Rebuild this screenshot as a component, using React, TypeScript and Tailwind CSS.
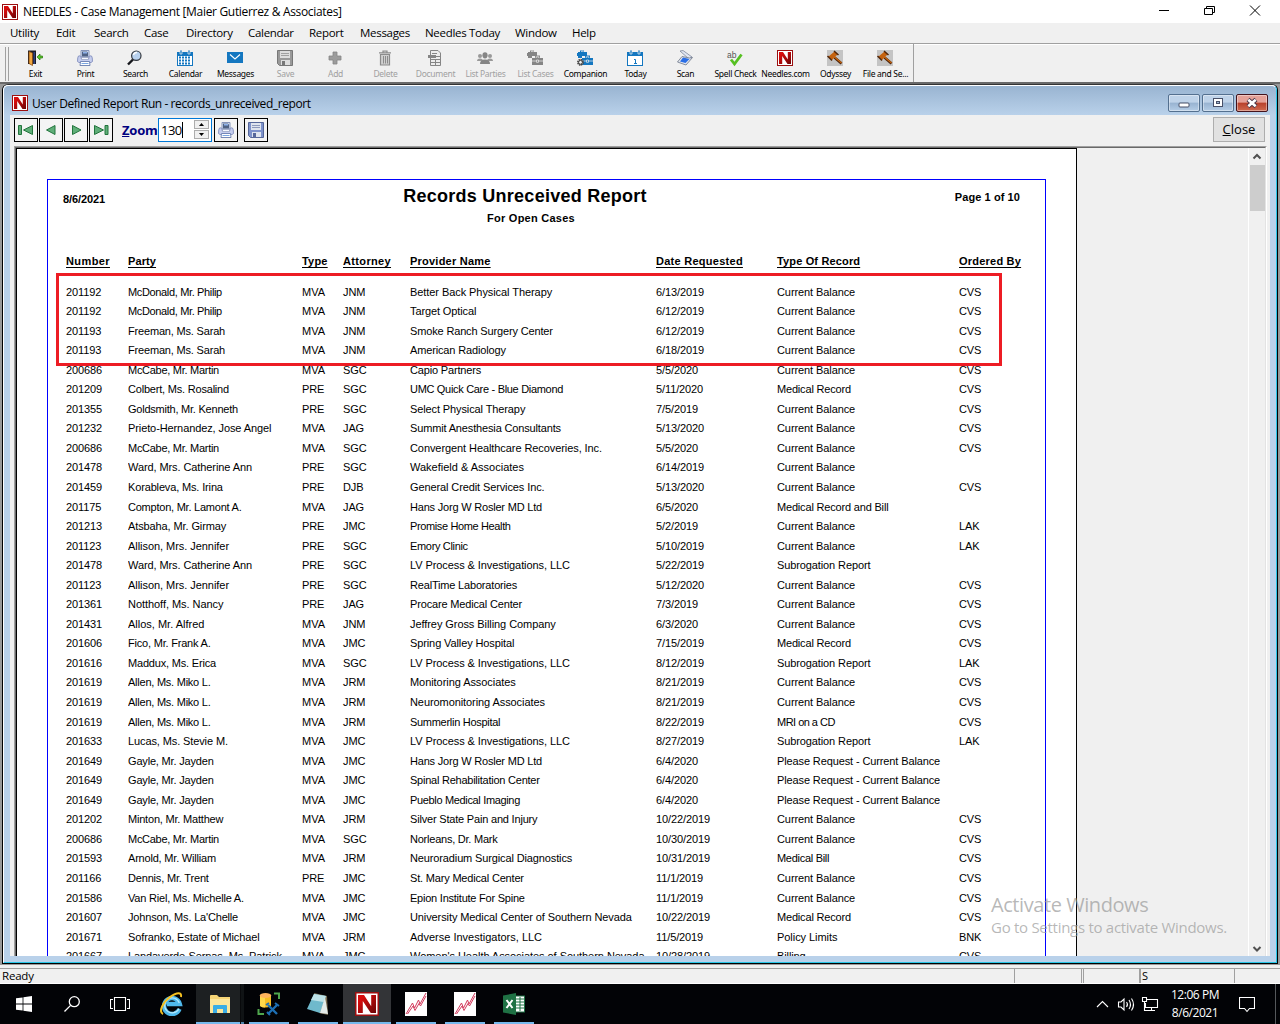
import React from "react";

type Row = [string, string, string, string, string, string, string, string];

const rows: Row[] = [
  ["201192", "McDonald, Mr. Philip", "MVA", "JNM", "Better Back Physical Therapy", "6/13/2019", "Current Balance", "CVS"],
  ["201192", "McDonald, Mr. Philip", "MVA", "JNM", "Target Optical", "6/12/2019", "Current Balance", "CVS"],
  ["201193", "Freeman, Ms. Sarah", "MVA", "JNM", "Smoke Ranch Surgery Center", "6/12/2019", "Current Balance", "CVS"],
  ["201193", "Freeman, Ms. Sarah", "MVA", "JNM", "American Radiology", "6/18/2019", "Current Balance", "CVS"],
  ["200686", "McCabe, Mr. Martin", "MVA", "SGC", "Capio Partners", "5/5/2020", "Current Balance", "CVS"],
  ["201209", "Colbert, Ms. Rosalind", "PRE", "SGC", "UMC Quick Care - Blue Diamond", "5/11/2020", "Medical Record", "CVS"],
  ["201355", "Goldsmith, Mr. Kenneth", "PRE", "SGC", "Select Physical Therapy", "7/5/2019", "Current Balance", "CVS"],
  ["201232", "Prieto-Hernandez, Jose Angel", "MVA", "JAG", "Summit Anesthesia Consultants", "5/13/2020", "Current Balance", "CVS"],
  ["200686", "McCabe, Mr. Martin", "MVA", "SGC", "Convergent Healthcare Recoveries, Inc.", "5/5/2020", "Current Balance", "CVS"],
  ["201478", "Ward, Mrs. Catherine Ann", "PRE", "SGC", "Wakefield & Associates", "6/14/2019", "Current Balance", ""],
  ["201459", "Korableva, Ms. Irina", "PRE", "DJB", "General Credit Services Inc.", "5/13/2020", "Current Balance", "CVS"],
  ["201175", "Compton, Mr. Lamont A.", "MVA", "JAG", "Hans Jorg W Rosler MD Ltd", "6/5/2020", "Medical Record and Bill", ""],
  ["201213", "Atsbaha, Mr. Girmay", "PRE", "JMC", "Promise Home Health", "5/2/2019", "Current Balance", "LAK"],
  ["201123", "Allison, Mrs. Jennifer", "PRE", "SGC", "Emory Clinic", "5/10/2019", "Current Balance", "LAK"],
  ["201478", "Ward, Mrs. Catherine Ann", "PRE", "SGC", "LV Process & Investigations, LLC", "5/22/2019", "Subrogation Report", ""],
  ["201123", "Allison, Mrs. Jennifer", "PRE", "SGC", "RealTime Laboratories", "5/12/2020", "Current Balance", "CVS"],
  ["201361", "Notthoff, Ms. Nancy", "PRE", "JAG", "Procare Medical Center", "7/3/2019", "Current Balance", "CVS"],
  ["201431", "Allos, Mr. Alfred", "MVA", "JNM", "Jeffrey Gross Billing Company", "6/3/2020", "Current Balance", "CVS"],
  ["201606", "Fico, Mr. Frank A.", "MVA", "JMC", "Spring Valley Hospital", "7/15/2019", "Medical Record", "CVS"],
  ["201616", "Maddux, Ms. Erica", "MVA", "SGC", "LV Process & Investigations, LLC", "8/12/2019", "Subrogation Report", "LAK"],
  ["201619", "Allen, Ms. Miko L.", "MVA", "JRM", "Monitoring Associates", "8/21/2019", "Current Balance", "CVS"],
  ["201619", "Allen, Ms. Miko L.", "MVA", "JRM", "Neuromonitoring Associates", "8/21/2019", "Current Balance", "CVS"],
  ["201619", "Allen, Ms. Miko L.", "MVA", "JRM", "Summerlin Hospital", "8/22/2019", "MRI on a CD", "CVS"],
  ["201633", "Lucas, Ms. Stevie M.", "MVA", "JMC", "LV Process & Investigations, LLC", "8/27/2019", "Subrogation Report", "LAK"],
  ["201649", "Gayle, Mr. Jayden", "MVA", "JMC", "Hans Jorg W Rosler MD Ltd", "6/4/2020", "Please Request - Current Balance", ""],
  ["201649", "Gayle, Mr. Jayden", "MVA", "JMC", "Spinal Rehabilitation Center", "6/4/2020", "Please Request - Current Balance", ""],
  ["201649", "Gayle, Mr. Jayden", "MVA", "JMC", "Pueblo Medical Imaging", "6/4/2020", "Please Request - Current Balance", ""],
  ["201202", "Minton, Mr. Matthew", "MVA", "JRM", "Silver State Pain and Injury", "10/22/2019", "Current Balance", "CVS"],
  ["200686", "McCabe, Mr. Martin", "MVA", "SGC", "Norleans, Dr. Mark", "10/30/2019", "Current Balance", "CVS"],
  ["201593", "Arnold, Mr. William", "MVA", "JRM", "Neuroradium Surgical Diagnostics", "10/31/2019", "Medical Bill", "CVS"],
  ["201166", "Dennis, Mr. Trent", "PRE", "JMC", "St. Mary Medical Center", "11/1/2019", "Current Balance", "CVS"],
  ["201586", "Van Riel, Ms. Michelle A.", "MVA", "JMC", "Epion Institute For Spine", "11/1/2019", "Current Balance", "CVS"],
  ["201607", "Johnson, Ms. La'Chelle", "MVA", "JMC", "University Medical Center of Southern Nevada", "10/22/2019", "Medical Record", "CVS"],
  ["201671", "Sofranko, Estate of Michael", "MVA", "JRM", "Adverse Investigators, LLC", "11/5/2019", "Policy Limits", "BNK"],
  ["201667", "Landaverde-Sernas, Ms. Patrick", "MVA", "JMC", "Women's Health Associates of Southern Nevada", "10/28/2019", "Billing", "CVS"],
];

// Letter spacing (px) for individual report values; anything absent uses the default.
const defaultTracking = -0.11;
const tracking: Record<string, number> = {
  "McDonald, Mr. Philip": -0.35,
  "Freeman, Ms. Sarah": -0.18,
  "McCabe, Mr. Martin": -0.28,
  "Colbert, Ms. Rosalind": -0.2,
  "Goldsmith, Mr. Kenneth": -0.23,
  "Prieto-Hernandez, Jose Angel": -0.1,
  "Ward, Mrs. Catherine Ann": -0.09,
  "Korableva, Ms. Irina": -0.15,
  "Compton, Mr. Lamont A.": -0.23,
  "Allison, Mrs. Jennifer": -0.05,
  "Notthoff, Ms. Nancy": -0.05,
  "Allos, Mr. Alfred": 0,
  "Fico, Mr. Frank A.": -0.2,
  "Maddux, Ms. Erica": -0.18,
  "Allen, Ms. Miko L.": -0.24,
  "Gayle, Mr. Jayden": -0.18,
  "Minton, Mr. Matthew": -0.2,
  "Arnold, Mr. William": -0.2,
  "Dennis, Mr. Trent": -0.18,
  "Van Riel, Ms. Michelle A.": -0.2,
  "Johnson, Ms. La'Chelle": -0.18,
  "Better Back Physical Therapy": -0.07,
  "Smoke Ranch Surgery Center": -0.15,
  "American Radiology": -0.15,
  "Capio Partners": -0.17,
  "UMC Quick Care - Blue Diamond": -0.31,
  "Summit Anesthesia Consultants": -0.15,
  "Convergent Healthcare Recoveries, Inc.": -0.08,
  "Wakefield & Associates": 0,
  "Hans Jorg W Rosler MD Ltd": -0.2,
  "Promise Home Health": -0.37,
  "Emory Clinic": -0.33,
  "LV Process & Investigations, LLC": -0.08,
  "RealTime Laboratories": -0.18,
  "Procare Medical Center": -0.16,
  "Jeffrey Gross Billing Company": -0.07,
  "Monitoring Associates": -0.06,
  "Neuromonitoring Associates": -0.08,
  "Summerlin Hospital": -0.29,
  "Spinal Rehabilitation Center": -0.24,
  "Pueblo Medical Imaging": -0.34,
  "Silver State Pain and Injury": -0.19,
  "Norleans, Dr. Mark": -0.23,
  "Neuroradium Surgical Diagnostics": -0.13,
  "St. Mary Medical Center": -0.18,
  "Epion Institute For Spine": -0.23,
  "University Medical Center of Southern Nevada": -0.1,
  "Adverse Investigators, LLC": 0,
  "Women's Health Associates of Southern Nevada": -0.05,
  "Current Balance": -0.09,
  "Medical Record": -0.18,
  "Medical Record and Bill": -0.18,
  "MRI on a CD": -0.52,
  "Please Request - Current Balance": -0.12,
  "Medical Bill": -0.29,
  "Policy Limits": -0.05,
  MVA: 0,
};

const headings: [string, string][] = [
  ["Number", "tracking-[0.4px]"],
  ["Party", "tracking-[0.1px]"],
  ["Type", "tracking-[0.2px]"],
  ["Attorney", "tracking-[0.35px]"],
  ["Provider Name", "tracking-[0.23px]"],
  ["Date Requested", "tracking-[0.27px]"],
  ["Type Of Record", "tracking-[0.15px]"],
  ["Ordered By", "tracking-[0.22px]"],
];

const menus: [string, string][] = [
  ["Utility", "w-[46px]"],
  ["Edit", "w-[38px]"],
  ["Search", "w-[50px]"],
  ["Case", "w-[42px]"],
  ["Directory", "w-[62px]"],
  ["Calendar", "w-[61px]"],
  ["Report", "w-[51px]"],
  ["Messages", "w-[65px]"],
  ["Needles Today", "w-[90px]"],
  ["Window", "w-[57px]"],
  ["Help", "w-[40px]"],
];

function NLogo({ className }: { className: string }) {
  return (
    <svg className={className} viewBox="0 0 16 16">
      <defs>
        <linearGradient id="needles" x1="0" y1="0" x2="1" y2="1">
          <stop offset="0.2" stopColor="#d80b0c" />
          <stop offset="1" stopColor="#6a0507" />
        </linearGradient>
      </defs>
      <rect x="0.5" y="0.5" width="15" height="15" fill="#fff" stroke="#9c0f10" />
      <path d="M2 2H6L10.8 9.5V2H14V14H10.5L5.2 6V14H2Z" fill="url(#needles)" />
    </svg>
  );
}

function PrinterIcon() {
  return (
    <svg className="size-4" viewBox="0 0 16 16">
      <path d="M4 0.5H12V7H4Z" fill="#dce6f7" stroke="#8493b8" />
      <path d="M5 1.5H10L11 2.5V6.5H5Z" fill="#4f6284" />
      <path d="M6 2H10V3.5H6Z" fill="#8fb2ea" />
      <path d="M1.5 6Q3 5.5 4 6.5V8.5H12V6.5Q13 5.5 14.5 6Q15.5 7 15.5 11.5L14 12.5H2L0.5 11.5Q0.5 7 1.5 6Z" fill="#c5cdee" stroke="#8390bd" strokeWidth="0.9" />
      <path d="M4.5 7.5H11.5V9.5H4.5Z" fill="#f6f9ff" stroke="#8391b5" strokeWidth="0.6" />
      <path d="M3.5 11.5H12.5L13 15.5H3Z" fill="#fff" stroke="#667caf" strokeWidth="0.9" />
      <path d="M4.5 13.5H11.5" stroke="#7aa6e2" />
    </svg>
  );
}

function FloppyIcon({ fill, dark, light }: { fill: string; dark: string; light: string }) {
  return (
    <svg className="size-4" viewBox="0 0 16 16">
      <path d="M0.5 0.5H15.5V15.5H2.5L0.5 13.5Z" fill={fill} stroke={dark} />
      <rect x="3" y="1" width="10" height="7" fill={light} />
      <path d="M4 3.5H12M4 5.5H12" stroke={dark} strokeWidth="0.6" />
      <rect x="4" y="10" width="9" height="5" fill={light} />
      <rect x="5" y="11" width="3" height="4" fill={dark} />
    </svg>
  );
}

function CasesIcon({ color, gear }: { color: string; gear: boolean }) {
  return (
    <svg className="size-4" viewBox="0 0 16 16">
      <path d="M3 2V0.5H7V2H10V6H5V8H1V6H0V3H1V2Z" fill={color} />
      <path d="M4.5 2V1.2H6.2V2" stroke="#f0f0f0" fill="none" strokeWidth="0.7" />
      <path d="M5 8H8V5.5H13V8H16V15H5Z" fill={color} />
      <path d="M9.2 8V6.8H11.8V8M5 11H9.5M11.5 11H16M9.5 10H11.5V12.3H9.5Z" stroke="#f0f0f0" fill="none" strokeWidth="0.7" />
      {gear && <circle cx="3.5" cy="12.3" r="2.6" fill="#f0f0f0" stroke="#444" strokeWidth="1.7" strokeDasharray="1.4 0.6" />}
      {gear && <circle cx="3.5" cy="12.3" r="1.9" fill="none" stroke="#444" strokeWidth="1" />}
    </svg>
  );
}

function CalendarIcon({ today }: { today: boolean }) {
  return (
    <svg className="size-4" viewBox="0 0 16 16">
      <path d="M0 2H16V16H0Z" fill="#1477c0" />
      <path d="M3 0H5V4H3ZM11 0H13V4H11Z" fill="#1477c0" stroke="#f0f0f0" strokeWidth="0.7" />
      <path d="M1 6H15V15H1Z" fill="#fff" />
      {today ? (
        <path d="M7 9.5H8.5V13.5M7 13.5H10" stroke="#1477c0" fill="none" />
      ) : (
        <path d="M2 7.5H14M2 10.5H14M2 13.5H14" stroke="#1477c0" strokeWidth="2" strokeDasharray="2 1" />
      )}
    </svg>
  );
}

function GavelIcon() {
  return (
    <svg className="size-4" viewBox="0 0 16 16">
      <rect width="16" height="16" fill="#c4c4c4" />
      <path d="M7.5 7.5L14.5 13.5" stroke="#4c2208" strokeWidth="2.6" />
      <path d="M7.5 7L14.5 13" stroke="#c9660f" strokeWidth="1.2" />
      <path d="M1.5 6.5L7.5 1.5L10.5 4.5L5 10Z" fill="#c4620f" />
      <path d="M0.5 6L5 10.5M7 1L11.5 5" stroke="#4f2407" strokeWidth="1.5" />
    </svg>
  );
}

const tools: { label: string; icon: React.ReactNode; off?: boolean }[] = [
  {
    label: "Exit",
    icon: (
      <svg className="size-4" viewBox="0 0 16 16">
        <path d="M1 0.5H9V14H1Z" fill="#1c1c24" />
        <path d="M2 1.5L5.5 3V15.5L2 13.5Z" fill="#f0a840" stroke="#8a4a0c" strokeWidth="0.8" />
        <path d="M6.5 2H8V14H6.5Z" fill="#2c3f7e" />
        <path d="M10 7L13 4V6H15.5V8H13V10Z" fill="#5cc52a" stroke="#27780b" strokeWidth="0.7" />
      </svg>
    ),
  },
  { label: "Print", icon: <PrinterIcon /> },
  {
    label: "Search",
    icon: (
      <svg className="size-4" viewBox="0 0 16 16">
        <path d="M1 14.5L6 9.5" stroke="#15171c" strokeWidth="2.4" />
        <circle cx="9.3" cy="5.7" r="4.7" fill="#b9d2ef" stroke="#33383f" strokeWidth="1.2" />
        <path d="M6.5 5A3 3 0 0 1 10 2.6" stroke="#fff" strokeWidth="1.6" fill="none" />
      </svg>
    ),
  },
  { label: "Calendar", icon: <CalendarIcon today={false} /> },
  {
    label: "Messages",
    icon: (
      <svg className="size-4" viewBox="0 0 16 16">
        <rect y="2" width="16" height="11" fill="#1477c0" />
        <path d="M3 4.5L8 9L13 4.5" stroke="#fff" fill="none" strokeWidth="1.1" />
      </svg>
    ),
  },
  { label: "Save", icon: <FloppyIcon fill="#999" dark="#777" light="#ddd" />, off: true },
  {
    label: "Add",
    icon: (
      <svg className="size-4" viewBox="0 0 16 16">
        <path d="M6 2H10V6H14V10H10V14H6V10H2V6H6Z" fill="#9c9c9c" stroke="#868686" strokeWidth="0.8" />
      </svg>
    ),
    off: true,
  },
  {
    label: "Delete",
    icon: (
      <svg className="size-4" viewBox="0 0 16 16">
        <path d="M3.5 4.5H12.5V15H3.5ZM2 2.8H14M6 2.5V1H10V2.5" fill="#d0d0d0" stroke="#8c8c8c" strokeWidth="1.2" />
        <path d="M6.5 6V13.5M8.5 6V13.5M10.5 6V13.5" stroke="#8c8c8c" />
      </svg>
    ),
    off: true,
  },
  {
    label: "Document",
    icon: (
      <svg className="size-4" viewBox="0 0 16 16">
        <path d="M3.5 0.5H11L13.5 3V15.5H3.5Z" fill="#ececec" stroke="#858585" />
        <path d="M1 5H9V8H1Z" fill="#858585" />
        <path d="M5 3.5H10M9 6.5H13M4 9.5H13M4 12.5H13M8.5 9V15" stroke="#858585" />
      </svg>
    ),
    off: true,
  },
  {
    label: "List Parties",
    icon: (
      <svg className="size-4" viewBox="0 0 16 16">
        <circle cx="3" cy="6" r="2" fill="#999" />
        <circle cx="13" cy="6" r="2" fill="#999" />
        <path d="M0 11Q0 8.5 3 8.5T6 11ZM10 11Q10 8.5 13 8.5T16 11Z" fill="#999" />
        <ellipse cx="8" cy="5.3" rx="2.6" ry="3.1" fill="#858585" />
        <path d="M3 14Q3 9.5 8 9.5T13 14Z" fill="#858585" />
      </svg>
    ),
    off: true,
  },
  { label: "List Cases", icon: <CasesIcon color="#858585" gear={false} />, off: true },
  { label: "Companion", icon: <CasesIcon color="#1477c0" gear /> },
  { label: "Today", icon: <CalendarIcon today /> },
  {
    label: "Scan",
    icon: (
      <svg className="size-4" viewBox="0 0 16 16">
        <path d="M3 1L6 0.5L15 7L12 9Z" fill="#dfe5f2" stroke="#7e8799" strokeWidth="0.8" />
        <path d="M0.5 12L5 6.5L12.5 8L15.5 7.5L9 15Z" fill="#e3e7ef" stroke="#6a7386" strokeWidth="0.8" />
        <path d="M3 11.5L6 7.5L12.5 9L8.5 13Z" fill="#2a6ee6" />
      </svg>
    ),
  },
  {
    label: "Spell Check",
    icon: (
      <svg className="size-4 overflow-visible" viewBox="0 0 16 16">
        <text x="0" y="7.5" fontSize="8.5" fontFamily="Liberation Sans" fill="#555">ab</text>
        <path d="M4 9.5L7.5 14L14.5 4.5" stroke="#56c022" strokeWidth="2.8" fill="none" />
      </svg>
    ),
  },
  { label: "Needles.com", icon: <NLogo className="size-4" /> },
  { label: "Odyssey", icon: <GavelIcon /> },
  { label: "File and Se...", icon: <GavelIcon /> },
];

function NavButton({ children }: { children: React.ReactNode }) {
  return (
    <div className="flex h-6 w-6 items-center justify-center border border-black bg-[#f4f4f4]">
      <svg className="size-4" viewBox="0 0 16 16" fill="#5fae78" stroke="#23753d">
        {children}
      </svg>
    </div>
  );
}

function TaskButton({ active, width, line, children }: { active?: boolean; width: string; line?: boolean; children: React.ReactNode }) {
  return (
    <div className={`flex h-10 flex-col ${width} ${active ? "bg-[#333437]" : ""}`}>
      <div className="flex h-[38px] items-center justify-center pt-[2px]">{children}</div>
      {line !== false && <div className="h-[2px] bg-[#76b9ed]" />}
    </div>
  );
}

function StockIcon() {
  return (
    <svg className="h-6 w-[22px]" viewBox="0 0 22 24">
      <rect width="22" height="24" fill="#fff" />
      <path d="M1 22L7.5 11L9.5 16L13.5 8L15 12L21 1M2.5 22L8 14L10 18.5L14 11.5L15.5 14L21 4" stroke="#d43c5e" fill="none" />
    </svg>
  );
}

function CaptionButton({ close, children }: { close?: boolean; children: React.ReactNode }) {
  return (
    <div
      className={`flex h-[18px] w-8 items-center justify-center rounded-[2px] border shadow-[inset_0_0_0_1px_#ffffff66] ${
        close
          ? "border-[#43131c] bg-linear-to-b from-[#e5a198] from-45% via-[#b8402b] via-50% to-[#cf6a50]"
          : "border-[#54708f] bg-linear-to-b from-[#bfd3e9] from-45% via-[#98b3d1] via-50% to-[#b5cde6]"
      }`}
    >
      {children}
    </div>
  );
}

export default function App() {
  return (
    <div className="relative flex h-[1024px] w-[1280px] flex-col overflow-hidden bg-[#f0f0f0] font-['Open_Sans',sans-serif] text-black">
      {/* Application title bar */}
      <header className="flex h-[23px] shrink-0 items-center bg-white pl-[2px]">
        <NLogo className="size-4" />
        <span className="ml-[5px] whitespace-nowrap text-[12px] tracking-[-0.32px]">NEEDLES - Case Management [Maier Gutierrez &amp; Associates]</span>
        <svg className="ml-auto h-[23px] w-[122px]" viewBox="0 0 122 23" fill="none" stroke="#000">
          <path d="M1 10.5H11M46.5 8.5H54.5V14.5H46.5ZM48.5 8V6.5H56.5V12.5H55M92 5.5L102 15.5M102 5.5L92 15.5" />
        </svg>
      </header>

      {/* Menu bar */}
      <nav className="flex h-5 shrink-0 items-center pl-[10px] text-[11.5px]">
        {menus.map(([m, w]) => (
          <span key={m} className={`${w} pb-px leading-[18px] whitespace-nowrap tracking-[-0.3px]`}>{m}</span>
        ))}
      </nav>

      {/* Toolbar */}
      <div className="flex h-[39px] shrink-0 border-t border-[#a0a0a0] shadow-[inset_0_1px_#fff]">
        <div className="mt-[3px] ml-[5px] h-[34px] w-[4px] border-x border-[#a0a0a0]" />
        <div className="ml-[1px] flex w-[904px] border-r border-[#a0a0a0] pt-[6px]">
          {tools.map((t) => (
            <div key={t.label} className="flex w-[50px] shrink-0 flex-col items-center">
              {t.icon}
              <span className={`mt-px ml-px whitespace-nowrap font-['Noto_Sans',sans-serif] text-[8.5px] leading-[13px] tracking-[-0.3px] ${t.off ? "text-[#a0a0a0]" : "text-black"}`}>{t.label}</span>
            </div>
          ))}
        </div>
      </div>

      {/* Report window */}
      <div className="flex h-[883px] shrink-0 border-t-2 border-[#696969] bg-[#999] pl-[2px]">
        <div className="flex h-[880px] w-[1276px] flex-col rounded-t-[6px] border border-black border-t-[#333] bg-[#b9d1ea]">
          <div className="flex grow flex-col rounded-t-[5px] border-t border-r border-b border-l border-t-white border-r-[#27c6e8] border-b-[#27c6e8] border-l-white">
            <div className="flex h-[29px] shrink-0 items-center rounded-t-[5px] bg-linear-to-b from-[#99b4d1] to-[#b9d1ea] pr-[8px] pl-2">
              <NLogo className="mt-[4px] size-4" />
              <span className="mt-[6px] ml-1 whitespace-nowrap text-[12px] tracking-[-0.42px]">User Defined Report Run - records_unreceived_report</span>
              <div className="mt-[5px] ml-auto flex gap-[2px]">
                <CaptionButton>
                  <svg className="h-4 w-5" viewBox="0 0 20 16"><rect x="5" y="8" width="10" height="4" rx="1" fill="#fff" stroke="#485068" /></svg>
                </CaptionButton>
                <CaptionButton>
                  <svg className="h-4 w-5" viewBox="0 0 20 16" fill="#fff" stroke="#485068"><rect x="5.5" y="3.5" width="9" height="8" /><rect x="8.5" y="6.5" width="3" height="2" fill="#9db6d2" /></svg>
                </CaptionButton>
                <CaptionButton close>
                  <svg className="h-4 w-5" viewBox="0 0 20 16"><path d="M6 4.5L14 11.5M14 4.5L6 11.5" stroke="#4a3546" strokeWidth="4.4" /><path d="M6.3 4.7L13.7 11.3M13.7 4.7L6.3 11.3" stroke="#fff" strokeWidth="2.6" /></svg>
                </CaptionButton>
              </div>
            </div>

            <div className="mr-[6px] ml-[6px] flex h-[841px] flex-col bg-[#f0f0f0]">
              <div className="flex h-[31px] shrink-0 items-center pr-[5px] pb-[2px] pl-1">
                <div className="flex gap-px">
                  <NavButton><path d="M0.5 3.5H3.5V12.5H0.5ZM14.5 3.5V12.5L5.5 8Z" /></NavButton>
                  <NavButton><path d="M12 3.5V12.5L3.5 8Z" /></NavButton>
                  <NavButton><path d="M4.5 3.5V12.5L13 8Z" /></NavButton>
                  <NavButton><path d="M1.5 3.5V12.5L10.5 8ZM12 3.5H15V12.5H12Z" /></NavButton>
                </div>
                <span className="ml-[9px] w-[36px] whitespace-nowrap text-[13px] leading-4 font-bold tracking-[-0.2px] text-[#000080]"><u>Z</u>oom</span>
                <div className="flex h-6 w-[54px] items-center border border-[#0078d7] bg-white pr-[2px] pl-[2px] text-[13px]">
                  <span className="border-r border-black leading-4 tracking-[-0.5px]">130</span>
                  <div className="ml-auto flex h-[19px] w-[15px] flex-col gap-px">
                    <div className="flex flex-1 items-center justify-center border border-[#adadad] bg-[#f0f0f0]"><svg className="h-[3px] w-[5px]" viewBox="0 0 5 3"><path d="M0 3L2.5 0L5 3Z" /></svg></div>
                    <div className="flex flex-1 items-center justify-center border border-[#adadad] bg-[#f0f0f0]"><svg className="h-[3px] w-[5px]" viewBox="0 0 5 3"><path d="M0 0L2.5 3L5 0Z" /></svg></div>
                  </div>
                </div>
                <div className="ml-[2px] flex size-6 items-center justify-center border border-black bg-[#f4f4f4]"><PrinterIcon /></div>
                <div className="ml-[6px] flex size-6 items-center justify-center border border-black bg-[#f4f4f4]"><FloppyIcon fill="#7e92cb" dark="#56679a" light="#dfe4ee" /></div>
                <div className="ml-auto flex h-[25px] w-[52px] items-center justify-center border border-[#adadad] bg-[#e1e1e1] text-[13px]"><span><u>C</u>lose</span></div>
              </div>

              {/* Preview area */}
              <div className="mr-[3px] ml-[4px] flex h-[810px] border-t border-r border-l border-t-[#a0a0a0] border-r-white border-l-[#a0a0a0]">
                <div className="flex grow overflow-hidden border-t border-r border-l border-t-[#696969] border-r-[#e3e3e3] border-l-[#696969]">
                  <div className="relative h-[1100px] w-[1061px] shrink-0 border border-black bg-white pt-[30px] pl-[30px] font-['Liberation_Sans',sans-serif]">
                    <div className="h-[1000px] w-[999px] border border-[#0000ff]">
                      <div className="flex h-[72px] pl-[15px] text-[11px] font-bold">
                        <span className="w-[261px] pt-[12px] leading-[14px] tracking-[-0.1px]">8/6/2021</span>
                        <div className="w-[402px] pt-[5px] text-center whitespace-nowrap">
                          <div className="text-[18px] leading-[22px] tracking-[0.26px]">Records Unreceived Report</div>
                          <div className="mt-[4px] pl-[12px] leading-[14px] tracking-[0.25px]">For Open Cases</div>
                        </div>
                        <span className="ml-auto pt-[10px] pr-[25px] leading-[14px] tracking-[0.08px]">Page 1 of 10</span>
                      </div>
                      <div className="grid h-[29.55px] grid-cols-[62px_174px_41px_67px_246px_121px_182px_1fr] pl-[18px] text-[11px] leading-[18px] font-bold underline underline-offset-[2px]">
                        {headings.map(([h, t]) => <span key={h} className={`whitespace-nowrap ${t}`}>{h}</span>)}
                      </div>
                      {rows.map((r, i) => (
                        <div key={i} className="grid h-[19.55px] grid-cols-[62px_174px_41px_67px_246px_121px_182px_1fr] pl-[18px] text-[11px] leading-[20px] whitespace-nowrap">
                          {r.map((c, j) => (
                            <span key={j} className={j === 1 ? "w-[156px] overflow-hidden" : ""} style={{ letterSpacing: tracking[c] ?? defaultTracking }}>{c}</span>
                          ))}
                        </div>
                      ))}
                    </div>
                    <div className="absolute top-[124px] left-[39px] h-[93px] w-[946px] border-[3px] border-[#ed1c24]" />
                  </div>
                  <div className="ml-auto flex w-[17px] shrink-0 flex-col items-center border-l border-white">
                    <svg className="h-[17px] w-4" viewBox="0 0 16 17"><path d="M4.5 10.5L8 7L11.5 10.5" fill="none" stroke="#505050" strokeWidth="2" /></svg>
                    <div className="h-[46px] w-[15px] bg-[#cdcdcd]" />
                    <svg className="mt-auto h-[17px] w-4" viewBox="0 0 16 17"><path d="M4.5 8L8 11.5L11.5 8" fill="none" stroke="#505050" strokeWidth="2" /></svg>
                  </div>
                </div>
              </div>
            </div>
          </div>
        </div>
      </div>

      {/* Status bar */}
      <div className="flex h-[19px] shrink-0 flex-col bg-[#f0f0f0] pt-[3px]">
        <div className="flex h-[15px] border-t border-[#a0a0a0] text-[11px] leading-[14px]">
          <span className="w-[1015px] border-r border-[#a0a0a0] pl-[2px] text-[11.5px] tracking-[-0.2px]">Ready</span>
          <span className="w-[67px] border-r border-[#a0a0a0]" />
          <span className="ml-px w-[57px] border-x border-[#a0a0a0]" />
          <span className="w-[95px] border-x border-[#a0a0a0] pl-px">S</span>
        </div>
        <div className="h-px bg-white" />
      </div>

      {/* Taskbar */}
      <footer className="flex h-10 shrink-0 bg-[#020306]">
        <TaskButton width="w-12" line={false}>
          <svg className="size-4" viewBox="0 0 16 16" fill="#fff"><path d="M0 2.3L6.6 1.4V7.6H0ZM7.4 1.2L16 0V7.6H7.4ZM0 8.4H6.6V14.6L0 13.7ZM7.4 8.4H16V16L7.4 14.8Z" /></svg>
        </TaskButton>
        <TaskButton width="w-12" line={false}>
          <svg className="size-4" viewBox="0 0 16 16" fill="none" stroke="#fff" strokeWidth="1.3"><circle cx="10.3" cy="5.7" r="5" /><path d="M6.6 9.4L0.5 15.5" /></svg>
        </TaskButton>
        <TaskButton width="w-12" line={false}>
          <svg className="h-4 w-5" viewBox="0 0 20 16" fill="none" stroke="#fff" strokeWidth="1.1"><path d="M4.5 1.5H15.5V14.5H4.5ZM3 3.5H0.5V12.5H3M17 3.5H19.5V12.5H17" /></svg>
        </TaskButton>
        <TaskButton width="w-[52px]" line={false}>
          <svg className="h-6 w-6 translate-x-px" viewBox="0 0 24 24" fill="none">
            <path d="M20.5 17A8 8 0 1 1 20.8 12H8" stroke="#4fb9ec" strokeWidth="4.4" />
            <path d="M20 16.5A7.5 7.5 0 1 1 20.3 11" stroke="#b5e9fc" strokeWidth="1.2" />
            <path d="M4 22C-1 20 4 10 11 5C18 0 23 0 22 5" stroke="#f5c021" strokeWidth="2" />
          </svg>
        </TaskButton>
        <div className="flex bg-[#101315]">
          <div className="bg-[#1d2022]">
            <TaskButton width="w-[44px]">
              <svg className="h-[18px] w-[22px] translate-x-[2px]" viewBox="0 0 22 18"><path d="M1 1Q1 0 2 0H8L10 2H21V18H1Z" fill="#f5d476" /><path d="M1 4H21V18H1Z" fill="#fde69b" /><path d="M4 18V11Q4 10 5 10H17Q18 10 18 11V18H14V14H8V18Z" fill="#3aade5" /></svg>
            </TaskButton>
          </div>
          <div className="w-[4px] border-l border-[#08090b]"><div className="mt-[38px] h-[2px] bg-[#4f83aa]" /></div>
        </div>
        <div className="ml-[5px] flex gap-[9px]">
          <TaskButton width="w-10">
            <svg className="h-6 w-6" viewBox="0 0 24 24">
              <path d="M3 3V14Q8 17 14 14V3Z" fill="#f6bd22" /><path d="M3 3V14Q5 15.5 8 15.5V4Z" fill="#ffd84a" /><ellipse cx="8.5" cy="3.5" rx="5.7" ry="2.6" fill="#ffb35c" />
              <path d="M17 1.5H22V7M1.5 17V22H7" stroke="#4fa64d" strokeWidth="2" fill="none" />
              <path d="M11 13L20 22M20 13L11 22" stroke="#1d6fb4" strokeWidth="2.4" /><path d="M9 13L12 11M18 11L22 14M10 20L13 23" stroke="#1d6fb4" strokeWidth="2" />
            </svg>
          </TaskButton>
          <TaskButton width="w-10">
            <svg className="h-6 w-6" viewBox="0 0 24 24">
              <path d="M8 1L21 4L22 23L13 21Z" fill="#796b50" /><path d="M8 2L20 4L14 21L1 17Z" fill="#6fb9cc" /><path d="M8 2L20 4L17.5 10L5 8Z" fill="#bde2e8" /><path d="M19 5L22 22L14 21Z" fill="#e4ecea" />
            </svg>
          </TaskButton>
        </div>
        <div className="ml-[5px]"><TaskButton width="w-12" active><NLogo className="size-6" /></TaskButton></div>
        <div className="ml-[5px] flex gap-[9px]">
          <TaskButton width="w-10"><StockIcon /></TaskButton>
          <TaskButton width="w-10"><StockIcon /></TaskButton>
          <TaskButton width="w-10">
            <svg className="h-[22px] w-[22px]" viewBox="0 0 22 22">
              <rect x="11" y="3" width="10.5" height="16" fill="#fff" stroke="#1f7144" />
              <path d="M12 6H21M12 9H21M12 12H21M12 15H21M17 4V18" stroke="#1f7144" />
              <path d="M0 2.5L13 0V22L0 19.5Z" fill="#1f7144" />
              <path d="M3.5 7L9.5 15M9.5 7L3.5 15" stroke="#fff" strokeWidth="2" />
            </svg>
          </TaskButton>
        </div>
        <div className="ml-auto flex items-center text-white">
          <svg className="h-4 w-[64px]" viewBox="0 0 64 16" fill="none" stroke="#fff" strokeWidth="1.1">
            <path d="M1 11L6.5 5.5L12 11" />
            <path d="M22.5 6H25L28 3V14L25 11H22.5ZM30.5 6Q32.5 8.5 30.5 11M33 4Q36 8.5 33 13M35.5 2.5Q39.5 8.5 35.5 14.5" />
            <path d="M51 3.5H61.5V11.5H49.5V7M46.5 1.5H50.5V5.5H46.5ZM48.5 6V14.5H59M55.5 12V14.5" />
          </svg>
          <div className="ml-[7px] w-[56px] text-center text-[12px] leading-[18px] tracking-[-0.45px]"><div>12:06 PM</div><div>8/6/2021</div></div>
          <svg className="ml-4 h-[17px] w-4" viewBox="0 0 16 17" fill="none" stroke="#fff" strokeWidth="1.1"><path d="M0.5 1.5H15.5V12.5H10.5L8 15.5L5.5 12.5H0.5Z" /></svg>
          <div className="ml-5 h-10 w-[5px] border-l border-[#55585b]" />
        </div>
      </footer>

      {/* Activation watermark */}
      <div className="absolute top-[892px] left-[991px] whitespace-nowrap text-[#999]/70">
        <div className="text-[20px] leading-[26px] tracking-[-0.43px]">Activate Windows</div>
        <div className="-mt-px text-[15px] leading-5 tracking-[-0.28px]">Go to Settings to activate Windows.</div>
      </div>
    </div>
  );
}
